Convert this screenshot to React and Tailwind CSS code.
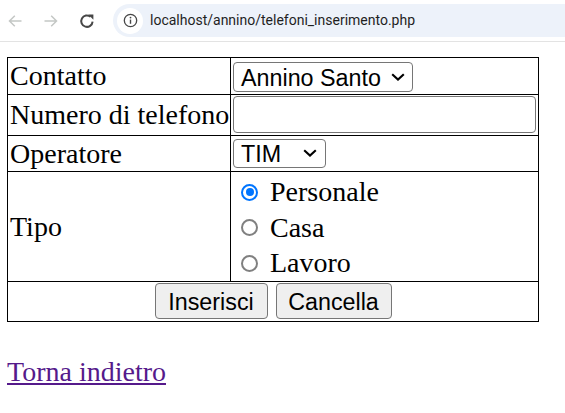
import React from "react";

function Chevron() {
  return (
    <svg width="14" height="8" viewBox="0 0 14 8" className="mt-[-1px] shrink-0">
      <path d="M1.2 1.2 L7 6.6 L12.8 1.2" fill="none" stroke="#000" strokeWidth="2.1" />
    </svg>
  );
}

function Radio({ checked, label }) {
  return (
    <label className="flex h-[35.5px] items-center">
      {checked ? (
        <span className="ml-[10px] flex h-[17px] w-[17px] shrink-0 items-center justify-center rounded-full border-[2.5px] border-[#0075ff] bg-white">
          <span className="h-[8px] w-[8px] rounded-full bg-[#0075ff]" />
        </span>
      ) : (
        <span className="ml-[10px] h-[17px] w-[17px] shrink-0 rounded-full border-2 border-[#808080] bg-white" />
      )}
      <span className="ml-[12px] leading-[32px]">{label}</span>
    </label>
  );
}

export default function App() {
  return (
    <div className="h-[413px] w-[565px] overflow-hidden bg-white font-['Liberation_Serif',serif] text-black">
      {/* browser toolbar */}
      <div className="flex h-[42px] items-center border-b border-[#e3e3e3]">
        <svg width="16" height="16" viewBox="0 0 16 16" className="ml-[7px]">
          <path d="M14.5 8H2.5 M7.8 2.8 L2.5 8 L7.8 13.2" fill="none" stroke="#c4c7c5" strokeWidth="1.5" />
        </svg>
        <svg width="16" height="16" viewBox="0 0 16 16" className="ml-[20px]">
          <path d="M1.5 8H13.5 M8.2 2.8 L13.5 8 L8.2 13.2" fill="none" stroke="#c4c7c5" strokeWidth="1.5" />
        </svg>
        <svg width="16" height="16" viewBox="0 0 16 16" className="ml-[20px]">
          <path d="M13.6 8.6 A5.7 5.7 0 1 1 11.6 3.8" fill="none" stroke="#474747" strokeWidth="2" />
          <path d="M9.2 1.6 L14.4 1.6 L14.4 6.8 Z" fill="#474747" />
        </svg>
        <div className="ml-[18px] flex h-[33px] flex-1 items-center rounded-l-full bg-[#edf2fa]">
          <div className="ml-[4px] flex h-[26px] w-[26px] items-center justify-center rounded-full bg-white">
            <svg width="15" height="15" viewBox="0 0 16 16">
              <circle cx="8" cy="8" r="6.6" fill="none" stroke="#474747" strokeWidth="1.4" />
              <path d="M8 7 V11.5" stroke="#474747" strokeWidth="1.5" />
              <circle cx="8" cy="4.9" r="0.95" fill="#474747" />
            </svg>
          </div>
          <span className="ml-[7px] font-['Roboto',sans-serif] text-[14px] text-[#1f1f1f]">
            localhost/annino/telefoni_inserimento.php
          </span>
        </div>
      </div>

      {/* page */}
      <div className="ml-[7px] mt-[15px] text-[28px]">
        <form className="w-[532px] border border-black">
          <div className="flex h-[36px]">
            <div className="flex w-[223px] items-center border-r border-black pl-[2px] leading-[32px]">Contatto</div>
            <div className="flex-1 pl-[2px] pt-[4px]">
              <div className="flex h-[30px] w-[180px] items-center justify-between rounded-[4px] border border-[#767676] bg-white pl-[7px] pr-[7px] font-['Liberation_Sans',sans-serif] text-[23.3px] leading-none">
                <span className="pt-[3px]">Annino Santo</span>
                <Chevron />
              </div>
            </div>
          </div>
          <div className="flex h-[41px] border-t border-black">
            <div className="flex w-[223px] items-center border-r border-black pl-[2px] leading-[32px]">Numero di telefono</div>
            <div className="flex-1 pl-[2px] pt-[1px]">
              <input
                type="text"
                className="block h-[37px] w-[303px] rounded-[4px] border-[1.5px] border-[#767676] bg-white outline-none"
              />
            </div>
          </div>
          <div className="flex h-[36px] border-t border-black">
            <div className="flex w-[223px] items-center border-r border-black pl-[2px] leading-[32px]">Operatore</div>
            <div className="flex-1 pl-[2px] pt-[3px]">
              <div className="flex h-[29px] w-[93px] items-center justify-between rounded-[4px] border border-[#767676] bg-white pl-[7px] pr-[8px] font-['Liberation_Sans',sans-serif] text-[23.3px] leading-none">
                <span className="pt-[3px]">TIM</span>
                <Chevron />
              </div>
            </div>
          </div>
          <div className="flex h-[110px] border-t border-black">
            <div className="flex w-[223px] items-center border-r border-black pl-[2px] leading-[32px]">Tipo</div>
            <div className="flex flex-1 flex-col justify-center pt-[2px]">
              <Radio checked label="Personale" />
              <Radio label="Casa" />
              <Radio label="Lavoro" />
            </div>
          </div>
          <div className="flex h-[40px] items-start justify-center gap-[8px] border-t border-black pt-[1px] font-['Liberation_Sans',sans-serif] text-[23.3px]">
            <button type="button" className="h-[36px] w-[113px] rounded-[4px] border border-[#767676] bg-[#efefef] pt-[3px] leading-none">
              Inserisci
            </button>
            <button type="button" className="h-[36px] w-[116px] rounded-[4px] border border-[#767676] bg-[#efefef] pt-[3px] leading-none">
              Cancella
            </button>
          </div>
        </form>
        <div className="mt-[34px] leading-[32px]">
          <a href="#" className="text-[#551a8b] underline">Torna indietro</a>
        </div>
      </div>
    </div>
  );
}
